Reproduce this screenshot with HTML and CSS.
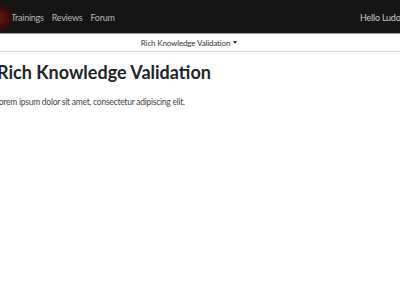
FILE: index.html
```html
<!DOCTYPE html>
<html>
<head>
<meta charset="utf-8">
<link rel="stylesheet" href="styles.css">
</head>
<body>
<header class="topbar">
  <div class="brand"><span class="logo"></span></div>
  <nav class="links">
    <a>Trainings</a>
    <a>Reviews</a>
    <a>Forum</a>
  </nav>
  <div class="user">Hello Ludovic</div>
</header>
<div class="subnav">
  <span class="subnav-item">Rich Knowledge Validation <span class="caret"></span></span>
</div>
<main class="content">
  <h1 class="title">Rich Knowledge Validation</h1>
  <p class="lead">Lorem ipsum dolor sit amet, consectetur adipiscing elit.</p>
</main>
</body>
</html>
```
FILE: styles.css
```css
html, body {
  margin: 0;
  padding: 0;
  background: #fff;
  width: 400px;
  overflow: hidden;
}
body {
  font-family: Lato, "Noto Sans", sans-serif;
  color: #212529;
}
.topbar {
  height: 33px;
  background: #151515;
  border-bottom: 1px solid #9a9a9a;
  display: flex;
  align-items: center;
  white-space: nowrap;
}
.brand {
  width: 11px;
  height: 33px;
  position: relative;
  flex: none;
}
.logo {
  position: absolute;
  left: -13px;
  top: 5px;
  width: 26px;
  height: 26px;
  border-radius: 50%;
  background: radial-gradient(circle, #6a1414 0%, #3a0c0c 55%, #1a0a0a 100%);
}
.links {
  display: flex;
  gap: 8px;
  font-size: 9px;
  letter-spacing: -0.25px;
  color: #b8b8b8;
  padding-top: 2px;
}
.links a { display: block; }
.user {
  margin-left: auto;
  margin-right: -11px;
  font-size: 9px;
  letter-spacing: -0.2px;
  color: #c8c8c8;
  padding-top: 2px;
}
.subnav {
  height: 17px;
  border-bottom: 1px solid #dcdcdc;
  display: flex;
  justify-content: center;
  align-items: center;
  padding-right: 22px;
  font-size: 8px;
  letter-spacing: -0.15px;
  color: #333;
}
.caret {
  display: inline-block;
  width: 0;
  height: 0;
  border-left: 2.5px solid transparent;
  border-right: 2.5px solid transparent;
  border-top: 3px solid #333;
  vertical-align: 2px;
  margin-left: 1px;
}
.content {
  margin-left: -3px;
}
.title {
  margin: 10px 0 0;
  font-size: 18px;
  font-weight: 700;
  line-height: 1.2;
  color: #212529;
}
.lead {
  margin: 13px 0 0 -2px;
  font-size: 8.5px;
  letter-spacing: -0.25px;
  color: #444;
}
```
